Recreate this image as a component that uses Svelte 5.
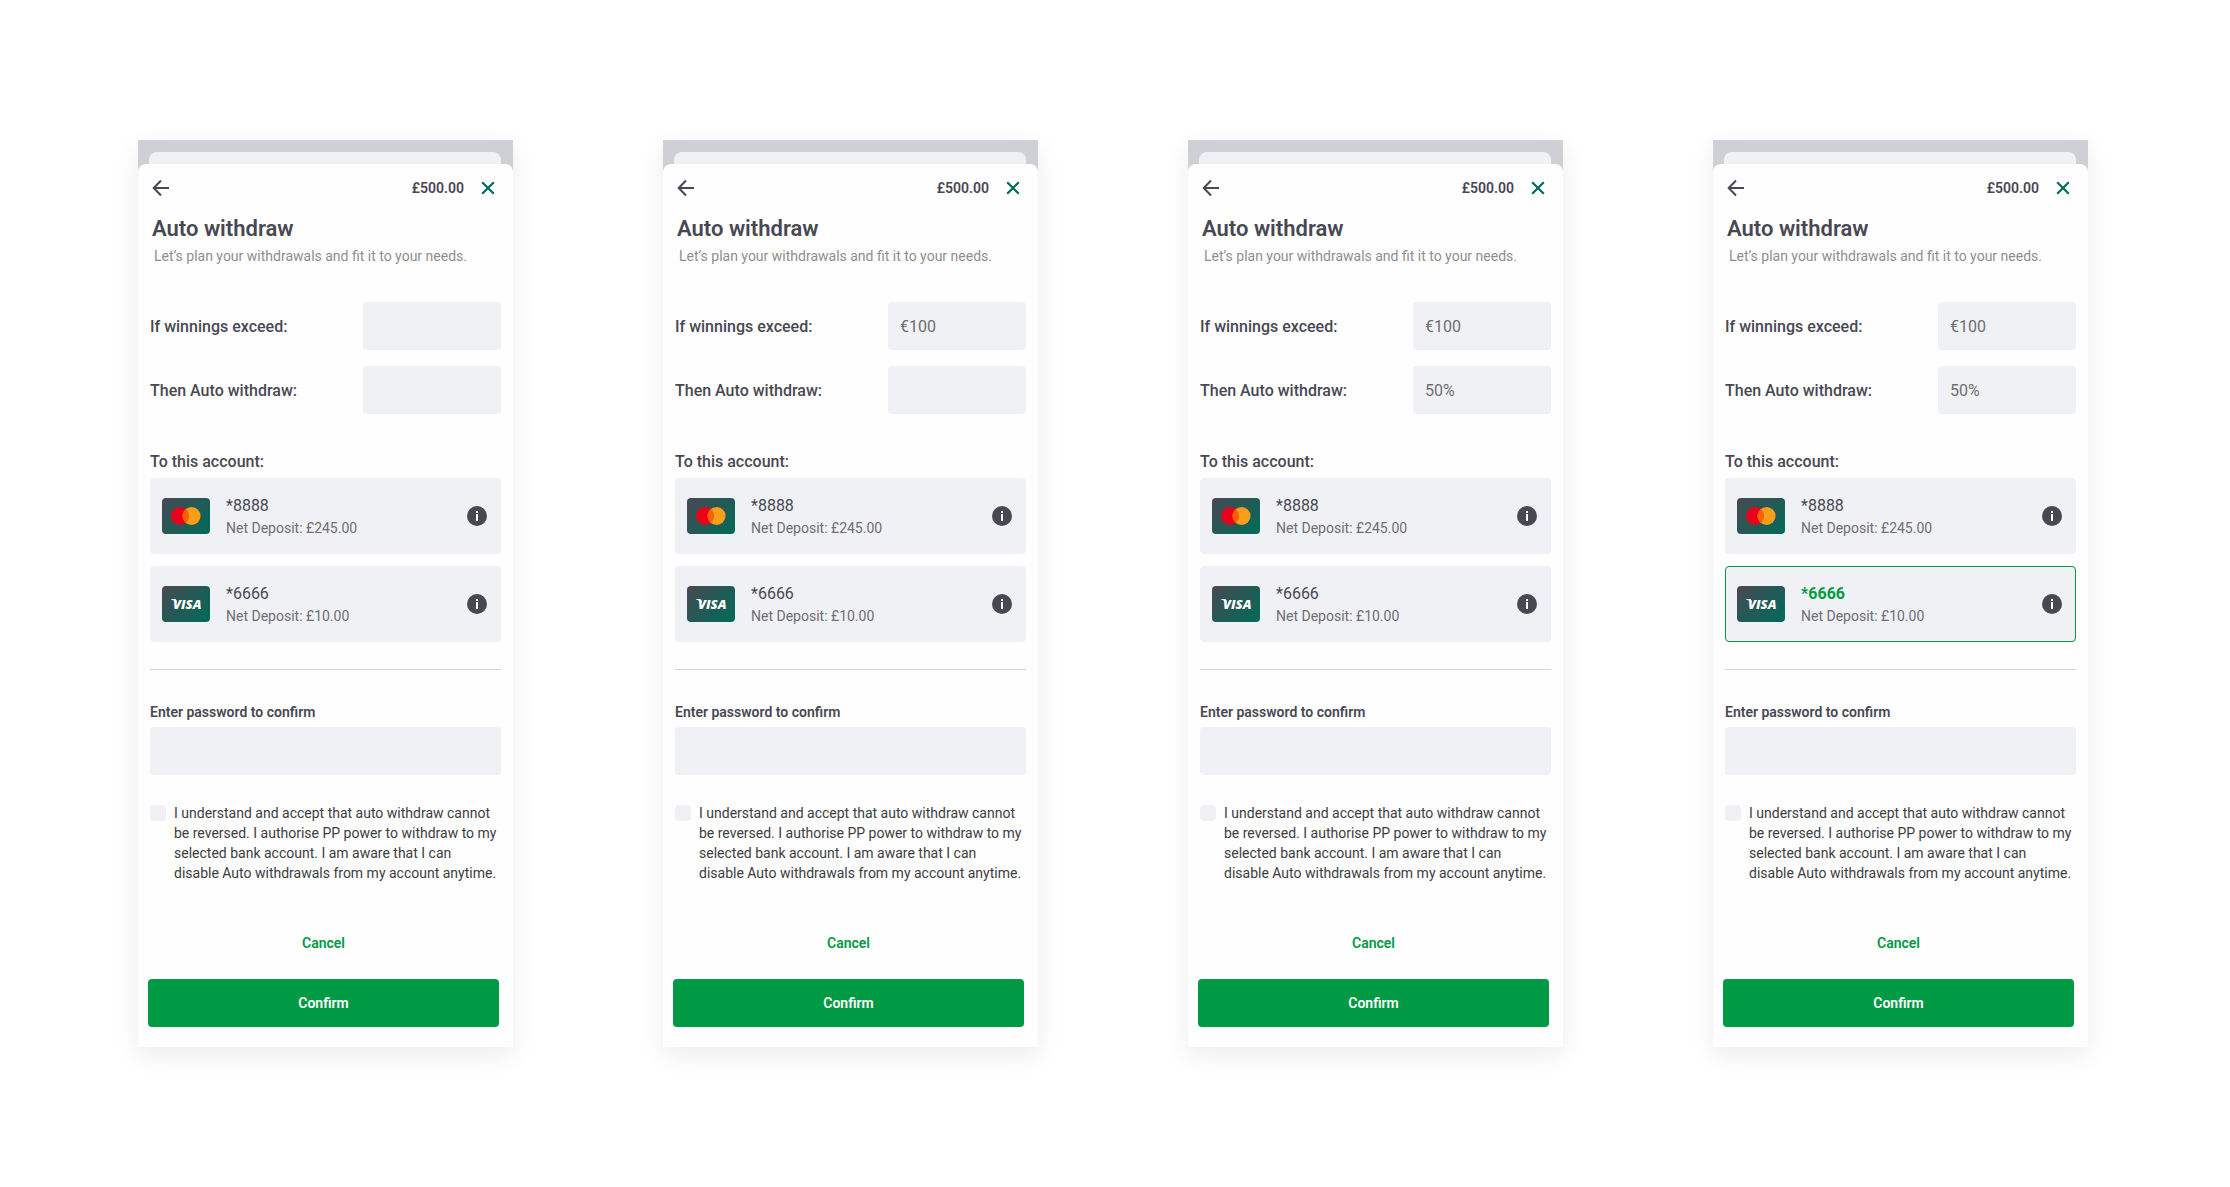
<script lang="ts">
    type Account = {
        id: string;
        brand: "mastercard" | "visa";
        number: string;
        deposit: string;
    };

    type Screen = {
        threshold: string;
        amount: string;
        account: string;
        password: string;
        accepted: boolean;
    };

    const balance = "£500.00";

    const accounts: Account[] = [
        {
            id: "mc",
            brand: "mastercard",
            number: "*8888",
            deposit: "£245.00",
        },
        { id: "visa", brand: "visa", number: "*6666", deposit: "£10.00" },
    ];

    const blank = { account: "", password: "", accepted: false };

    let screens = $state<Screen[]>([
        { ...blank, threshold: "", amount: "" },
        { ...blank, threshold: "€100", amount: "" },
        { ...blank, threshold: "€100", amount: "50%" },
        { ...blank, threshold: "€100", amount: "50%", account: "visa" },
    ]);
</script>

<main>
    {#each screens as screen, i}
        <section class="phone">
            <div class="backdrop">
                <div class="back-sheet"></div>
            </div>
            <form class="sheet" onsubmit={(e) => e.preventDefault()}>
                <header>
                    <button type="button" class="icon-btn" aria-label="Back">
                        <svg width="18" height="18" viewBox="0 0 18 18">
                            <path
                                d="M17 9H2M9 1.5L1.7 9L9 16.5"
                                fill="none"
                                stroke="#484853"
                                stroke-width="2"
                            />
                        </svg>
                    </button>
                    <span class="balance">{balance}</span>
                    <button type="button" class="icon-btn" aria-label="Close">
                        <svg width="14" height="14" viewBox="0 0 14 14">
                            <path
                                d="M1.2 1.2L12.8 12.8M12.8 1.2L1.2 12.8"
                                fill="none"
                                stroke="#006b59"
                                stroke-width="2.2"
                            />
                        </svg>
                    </button>
                </header>

                <h1>Auto withdraw</h1>
                <p class="intro">
                    Let’s plan your withdrawals and fit it to your needs.
                </p>

                <div class="rules">
                    <div class="rule">
                        <label for="threshold-{i}">If winnings exceed:</label>
                        <input
                            type="text"
                            id="threshold-{i}"
                            autocomplete="off"
                            bind:value={screen.threshold}
                        />
                    </div>
                    <div class="rule">
                        <label for="amount-{i}">Then Auto withdraw:</label>
                        <input
                            type="text"
                            id="amount-{i}"
                            autocomplete="off"
                            bind:value={screen.amount}
                        />
                    </div>
                </div>

                <fieldset>
                    <legend>To this account:</legend>
                    {#each accounts as account}
                        <div
                            class="account"
                            class:selected={screen.account === account.id}
                        >
                            <label>
                                <input
                                    type="radio"
                                    name="account-{i}"
                                    value={account.id}
                                    bind:group={screen.account}
                                />
                                <span class="brand">
                                    {#if account.brand === "mastercard"}
                                        <svg
                                            width="30"
                                            height="18"
                                            viewBox="0 0 30 18"
                                        >
                                            <circle cx="9" cy="9" r="9" fill="#eb001b" />
                                            <circle cx="20.6" cy="9" r="9" fill="#f79e1b" />
                                            <path
                                                d="M14.8 2.1a9 9 0 0 1 0 13.8a9 9 0 0 1 0-13.8z"
                                                fill="#ff5f00"
                                            />
                                        </svg>
                                    {:else}
                                        <svg
                                            width="34"
                                            height="20"
                                            viewBox="0 0 34 20"
                                        >
                                            <path d="M2 5h4.6l1.6 4Q5.8 6 2 5.4z" fill="#fff" />
                                            <text x="4" y="15">VISA</text>
                                        </svg>
                                    {/if}
                                </span>
                                <span class="details">
                                    <span class="number">{account.number}</span>
                                    <span class="deposit"
                                        >Net Deposit: {account.deposit}</span
                                    >
                                </span>
                            </label>
                            <button
                                type="button"
                                class="icon-btn"
                                aria-label="Account info"
                            >
                                <svg width="20" height="20" viewBox="0 0 20 20">
                                    <circle cx="10" cy="10" r="10" fill="#484853" />
                                    <path
                                        d="M9 5h2v2H9zM9 8h2v7H9z"
                                        fill="#fff"
                                    />
                                </svg>
                            </button>
                        </div>
                    {/each}
                </fieldset>

                <hr />

                <label class="password-label" for="password-{i}"
                    >Enter password to confirm</label
                >
                <input
                    type="password"
                    id="password-{i}"
                    autocomplete="off"
                    bind:value={screen.password}
                />

                <label class="terms">
                    <input type="checkbox" bind:checked={screen.accepted} />
                    <span
                        >I understand and accept that auto withdraw cannot be
                        reversed. I authorise PP power to withdraw to my
                        selected bank account. I am aware that I can disable
                        Auto withdrawals from my account anytime.</span
                    >
                </label>

                <footer>
                    <button type="button" class="cancel">Cancel</button>
                    <button type="submit" class="confirm">Confirm</button>
                </footer>
            </form>
        </section>
    {/each}
</main>

<style>
    :global(body) {
        margin: 0;
        background: #fff;
    }

    main {
        display: grid;
        grid-template-columns: repeat(4, minmax(0, 1fr));
        gap: 150px;
        padding: 140px 142px 140px 138px;
        font-family: Roboto, "Liberation Sans", sans-serif;
        font-size: 14px;
        color: #484853;
    }

    .phone {
        background: #cfd0d5;
        box-shadow: 0 8px 24px rgba(0, 0, 0, 0.08);
    }

    .backdrop {
        padding: 12px 12px 0 11px;
    }

    .back-sheet {
        height: 12px;
        border-radius: 8px 8px 0 0;
        background: #f0f1f5;
    }

    .sheet {
        display: flex;
        flex-direction: column;
        padding: 0 12px 20px;
        border-radius: 8px 8px 0 0;
        background: #fefefe;
    }

    header {
        display: flex;
        align-items: center;
        height: 48px;
        padding: 0 6px 0 2px;
    }

    .balance {
        margin-left: auto;
        margin-right: 17px;
        font-weight: 600;
    }

    button {
        border: none;
        padding: 0;
        background: none;
        font: inherit;
        cursor: pointer;
    }

    .icon-btn {
        display: flex;
    }

    h1 {
        margin: 4px 2px 0;
        font-size: 22px;
        line-height: 26px;
        font-weight: 600;
    }

    .intro {
        margin: 4px 4px 0;
        line-height: 20px;
        color: #8e8e8e;
    }

    .rules {
        display: flex;
        flex-direction: column;
        gap: 16px;
        margin-top: 36px;
    }

    .rule {
        display: flex;
        align-items: center;
        justify-content: space-between;
    }

    .rule label,
    legend {
        font-size: 16px;
        font-weight: 500;
    }

    input[type="text"],
    input[type="password"] {
        box-sizing: border-box;
        height: 48px;
        border: none;
        border-radius: 4px;
        padding: 0 12px;
        background: #f0f1f5;
        font: inherit;
        font-size: 16px;
        color: #6e6e73;
    }

    .rule input {
        width: 138px;
    }

    fieldset {
        display: flex;
        flex-direction: column;
        gap: 12px;
        min-width: 0;
        margin: 38px 0 0;
        border: none;
        padding: 0;
    }

    legend {
        padding: 0 0 6px;
        line-height: 20px;
    }

    .account {
        display: flex;
        align-items: center;
        box-sizing: border-box;
        height: 76px;
        border: 1px solid #f0f1f5;
        border-radius: 4px;
        padding: 0 13px 0 11px;
        background: #f0f1f5;
    }

    .account label {
        display: flex;
        flex: 1;
        align-items: center;
        gap: 16px;
        cursor: pointer;
    }

    .account input {
        position: absolute;
        opacity: 0;
        pointer-events: none;
    }

    .selected {
        border-color: #009a44;
    }

    .brand {
        display: flex;
        align-items: center;
        justify-content: center;
        width: 48px;
        height: 36px;
        border-radius: 4px;
        background: linear-gradient(135deg, #484853, #006b59);
    }

    .brand text {
        font-family: "Open Sans", sans-serif;
        font-size: 13px;
        font-style: italic;
        font-weight: 800;
        fill: #fff;
    }

    .details {
        display: flex;
        flex-direction: column;
        padding-top: 2px;
    }

    .number {
        font-size: 16px;
        line-height: 22px;
    }

    .selected .number {
        font-weight: 700;
        color: #009a44;
    }

    .deposit {
        line-height: 22px;
        color: #6e6e73;
    }

    hr {
        width: 100%;
        height: 1px;
        margin: 27px 0 0;
        border: none;
        background: #d4d4d8;
    }

    .password-label {
        margin-top: 32px;
        margin-bottom: 5px;
        line-height: 20px;
        font-weight: 600;
    }

    .terms {
        display: flex;
        gap: 8px;
        margin-top: 28px;
        padding-right: 4px;
        line-height: 20px;
        color: #3c3c41;
    }

    .terms input {
        flex: none;
        appearance: none;
        width: 16px;
        height: 16px;
        margin: 2px 0 0;
        border-radius: 4px;
        background: #f0f1f5;
    }

    .terms input:checked {
        background: #009a44;
    }

    footer {
        display: flex;
        flex-direction: column;
        margin: 36px 2px 0 -2px;
    }

    footer button {
        height: 48px;
        font-weight: 600;
    }

    .cancel {
        color: #009a44;
    }

    .confirm {
        margin-top: 12px;
        border-radius: 4px;
        background: #009a44;
        color: #fff;
    }
</style>
